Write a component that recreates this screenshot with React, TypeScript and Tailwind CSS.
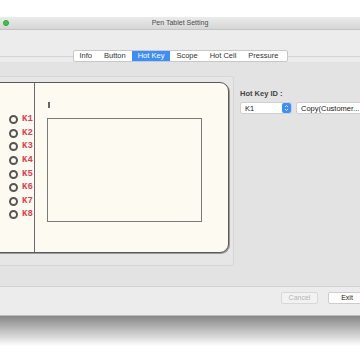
const tabs = ["Info", "Button", "Hot Key", "Scope", "Hot Cell", "Pressure"];
const keys = ["K1", "K2", "K3", "K4", "K5", "K6", "K7", "K8"];

export default function App() {
  return (
    <div
      className="w-[360px] h-[360px] bg-white overflow-hidden flex flex-col"
      style={{ fontFamily: '"Liberation Sans", Arial, sans-serif' }}
    >
      <div className="h-[17px] shrink-0 bg-white" />

      {/* title bar */}
      <div className="h-[13px] shrink-0 flex items-center relative bg-gradient-to-b from-[#ebebeb] to-[#d6d6d6] border-b border-[#c4c4c4]">
        <div className="ml-[3px] w-[6px] h-[6px] rounded-full bg-[#34c84a] border border-[#2aa43c]" />
        <div className="flex-1 text-center text-[7px] text-[#4d4d4d] -ml-[9px]">Pen Tablet Setting</div>
      </div>

      {/* window body */}
      <div className="h-[285px] shrink-0 bg-[#ececec] flex flex-col">
        <div className="h-[20px] shrink-0" />
        <div className="relative shrink-0">
          <div className="absolute left-0 right-0 top-[6px] h-px bg-[#d4d4d4]" />
          <div className="relative mx-auto w-[215px] h-[12px] flex bg-white border border-[#c8c8c8] rounded-[2px] text-[7.5px] text-[#333] overflow-hidden">
            {tabs.map((t) => (
              <div
                key={t}
                className={
                  t === "Hot Key"
                    ? "flex items-center justify-center px-[6px] bg-[#3d8ef7] text-white"
                    : "flex items-center justify-center px-[6px]"
                }
              >
                {t}
              </div>
            ))}
          </div>
        </div>

        {/* tab content */}
        <div className="h-[225px] shrink-0 bg-[#e3e3e3] border-b border-[#d2d2d2] flex pt-[14px]">
          <div className="w-[234px] h-[190px] shrink-0 border-t border-r border-b border-[#d6d6d6] rounded-r-[3px] bg-[#e6e6e6] pt-[5px] pr-[4px]">
            <div className="h-[171px] -ml-[10px] border-[1.5px] border-[#5a5a5a] rounded-[9px] bg-[#fdfbf1] flex shadow-[1px_1px_0_#9a9a9a]">
              <div className="w-[44px] shrink-0 border-r border-[#6a6a6a] flex flex-col pt-[32px] pl-[18px] gap-[4px]">
                {keys.map((k) => (
                  <div key={k} className="flex items-center h-[9.6px] gap-[4px]">
                    <div className="w-[9px] h-[9px] rounded-full border-[2px] border-[#555]" />
                    <span
                      className="text-[9px] leading-none font-bold text-[#e0404e]"
                      style={{ fontFamily: '"Liberation Mono", monospace' }}
                    >
                      {k}
                    </span>
                  </div>
                ))}
              </div>
              <div className="flex-1 pl-[12px] pt-[19px]">
                <div className="w-[2px] h-[6px] bg-[#666] ml-[1px]" />
                <div className="mt-[10px] w-[155px] h-[104px] border border-[#7a7a7a]" />
              </div>
            </div>
          </div>

          <div className="pl-[6px] pt-[12px] flex flex-col">
            <div className="text-[7.5px] font-bold text-[#444] mb-[3px]">Hot Key ID :</div>
            <div className="flex gap-[4px]">
              <div className="w-[52px] h-[12px] bg-white border border-[#cfcfcf] rounded-[2px] flex items-center relative">
                <span className="text-[7.5px] text-[#222] pl-[4px]">K1</span>
                <div className="absolute right-[0px] top-[0px] w-[9px] h-[10px] bg-[#3d8ef7] rounded-[2px] flex flex-col items-center justify-center">
                  <svg width="5" height="8" viewBox="0 0 5 8">
                    <path d="M1 3 L2.5 1.5 L4 3 M1 5 L2.5 6.5 L4 5" stroke="white" strokeWidth="0.8" fill="none" />
                  </svg>
                </div>
              </div>
              <div className="w-[70px] h-[12px] bg-white border border-[#cfcfcf] rounded-[2px] flex items-center pl-[4px] text-[7.5px] text-[#222] whitespace-nowrap">
                Copy(Customer...
              </div>
            </div>
          </div>
        </div>

        {/* footer buttons */}
        <div className="flex justify-end pt-[5px] gap-[10px] -mr-[6px]">
          <div className="w-[37px] h-[12px] bg-[#f2f2f2] border border-[#d8d8d8] rounded-[2px] text-[7px] text-[#b5b5b5] flex items-center justify-center">
            Cancel
          </div>
          <div className="w-[38px] h-[12px] bg-white border border-[#cdcdcd] rounded-[2px] text-[7px] text-[#222] flex items-center justify-center">
            Exit
          </div>
        </div>
      </div>

      {/* window shadow */}
      <div className="h-[1px] bg-[#bdbdbd] shrink-0" />
      <div className="h-[30px] shrink-0 bg-gradient-to-b from-[#888] to-white" />
    </div>
  );
}
